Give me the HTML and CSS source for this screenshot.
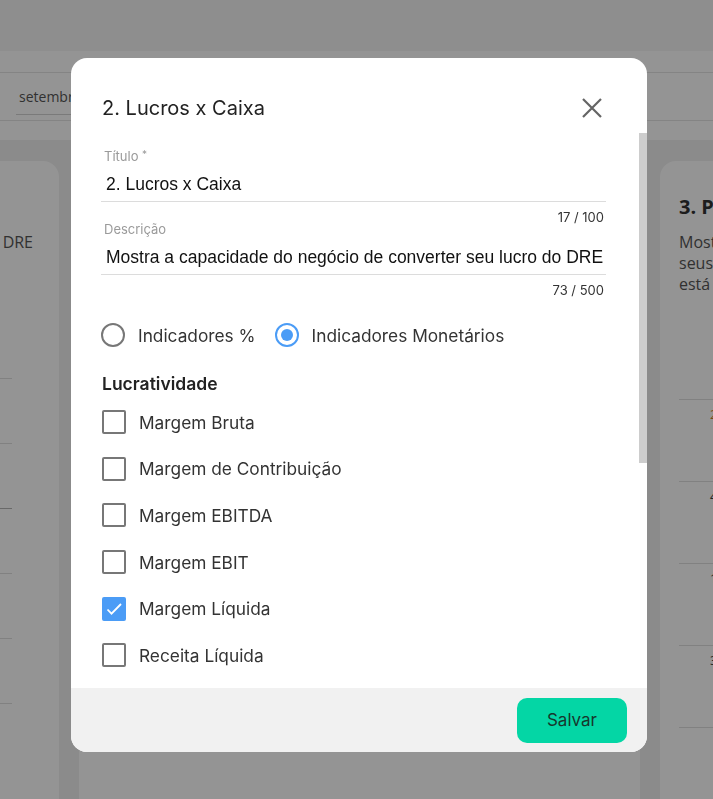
FILE: index.html
```html
<!DOCTYPE html>
<html lang="pt-BR">
<head>
  <meta charset="UTF-8">
  <meta name="viewport" content="width=device-width, initial-scale=1">
  <title>Indicadores - Lucros x Caixa</title>
  <link rel="stylesheet" href="styles.css">
</head>
<body>

<div class="page">
  <header class="topbar"></header>

  <div class="filters">
    <div class="filter-box">
      <div class="select">setembro de 2024</div>
    </div>
  </div>

  <main class="cards">
    <article class="card card-prev">
      <h3 class="card-title">1. Resultado</h3>
      <p class="card-desc">Mostra o resultado do período conforme o DRE</p>
      <ul class="rows rows-prev">
        <li></li><li></li><li class="strong"></li><li></li><li></li><li></li>
      </ul>
    </article>

    <article class="card">
      <h3 class="card-title">2. Lucros x Caixa</h3>
      <p class="card-desc">Mostra a capacidade do negócio de converter seu lucro do DRE em caixa.</p>
    </article>

    <article class="card">
      <h3 class="card-title">3. Prazos</h3>
      <p class="card-desc">Mostra os prazos médios de recebimento e pagamento e<br>seus impactos no ciclo financeiro da empresa, e se<br>está equilibrado.</p>
      <ul class="rows rows-next">
        <li><span class="warn">25 dias</span></li><li><span>40 dias</span></li><li><span>15 dias</span></li><li><span>30 dias</span></li><li></li>
      </ul>
    </article>
  </main>
</div>

<div class="overlay">
  <div class="modal">
    <div class="modal-head">
      <h2>2. Lucros x Caixa</h2>
      <button class="close" type="button">
        <svg width="24" height="24" viewBox="0 0 24 24"><path d="M3 3L21 21M21 3L3 21" stroke="#646464" stroke-width="2.2" fill="none"/></svg>
      </button>
    </div>

    <div class="modal-body">
      <div class="scroll-content">
        <div class="field">
          <label class="field-label">Título <span class="req">*</span></label>
          <div class="field-input">2. Lucros x Caixa</div>
        </div>
        <div class="counter">17 / 100</div>

        <div class="field">
          <label class="field-label">Descrição</label>
          <div class="field-input">Mostra a capacidade do negócio de converter seu lucro do DRE</div>
        </div>
        <div class="counter">73 / 500</div>

        <div class="radios">
          <label class="radio"><span class="dot"></span>Indicadores %</label>
          <label class="radio"><span class="dot on"></span>Indicadores Monetários</label>
        </div>

        <h4 class="group">Lucratividade</h4>
        <label class="check"><span class="box"></span>Margem Bruta</label>
        <label class="check"><span class="box"></span>Margem de Contribuição</label>
        <label class="check"><span class="box"></span>Margem EBITDA</label>
        <label class="check"><span class="box"></span>Margem EBIT</label>
        <label class="check"><span class="box on"><svg width="20" height="20" viewBox="0 0 20 20"><path d="M3.5 10.5l4 4.2L17 5" stroke="#fff" stroke-width="1.8" fill="none"/></svg></span>Margem Líquida</label>
        <label class="check"><span class="box"></span>Receita Líquida</label>
        <label class="check"><span class="box"></span>Lucro Líquido</label>
        <label class="check"><span class="box"></span>EBITDA</label>
        <label class="check"><span class="box"></span>Lucro Operacional</label>

        <h4 class="group">Caixa</h4>
        <label class="check"><span class="box"></span>Geração de Caixa Operacional</label>
        <label class="check"><span class="box"></span>Fluxo de Caixa Livre</label>
        <label class="check"><span class="box"></span>Conversão de Caixa</label>
      </div>
      <div class="scrollbar"><div class="thumb"></div></div>
    </div>

    <div class="modal-foot">
      <button class="btn-save" type="button">Salvar</button>
    </div>
  </div>
</div>

</body>
</html>
```

FILE: styles.css
```css
body {
  margin: 0;
  font-family: 'Open Sans', sans-serif;
  overflow: hidden;
}
.page {
  height: 100vh;
  display: flex;
  flex-direction: column;
  background: #f0f0f0;
}
.topbar {
  height: 51px;
  flex-shrink: 0;
  background: #f5f5f5;
}
.filters {
  height: 89px;
  flex-shrink: 0;
  box-sizing: border-box;
  padding-top: 21px;
  background: #fff;
}
.filter-box {
  height: 49px;
  box-sizing: border-box;
  border-top: 1px solid #e4e4e4;
  border-bottom: 1px solid #e4e4e4;
  padding-left: 16px;
}
.select {
  width: 170px;
  padding: 14px 3px 8px;
  line-height: 19px;
  font-size: 14px;
  color: #555;
  border-bottom: 1px solid #d2d2d2;
}
.cards {
  flex: 1;
  display: flex;
  justify-content: center;
  gap: 20px;
  padding: 21px 0 0 6px;
  overflow: hidden;
}
.card {
  flex: 0 0 561px;
  box-sizing: border-box;
  padding: 33px 47px 0 19px;
  background: #fff;
  border-radius: 16px 16px 0 0;
}
.card-title {
  margin: 0;
  font-size: 20px;
  line-height: 26px;
  font-weight: 700;
  color: #333;
}
.card-desc {
  margin: 12px 0 0;
  font-size: 16px;
  line-height: 21px;
  color: #555;
}
.card-prev .card-desc {
  text-align: right;
  white-space: nowrap;
  margin-right: -21px;
}
.rows {
  list-style: none;
  margin: 0;
  padding: 0;
}
.rows li {
  box-sizing: border-box;
  border-top: 1px solid #dedede;
}
.rows-prev {
  margin-top: 125px;
}
.rows-prev li {
  height: 65px;
}
.rows-prev li.strong {
  border-top-color: #b5b5b5;
}
.rows-next {
  margin-top: 104px;
}
.rows-next li {
  height: 82px;
  padding: 5px 0 0 31px;
  font-size: 13px;
  color: #444;
}
.rows-next .warn {
  color: #c9822a;
}

/* modal */
.overlay {
  position: fixed;
  inset: 0;
  display: flex;
  justify-content: center;
  align-items: flex-start;
  box-sizing: border-box;
  padding: 58px 0 0 5px;
  background: rgba(0,0,0,0.42);
}
.modal {
  width: 576px;
  height: 694px;
  display: flex;
  flex-direction: column;
  overflow: hidden;
  background: #fff;
  border-radius: 16px;
  font-family: Inter, sans-serif;
  color: #333;
}
.modal-head {
  height: 75px;
  flex-shrink: 0;
  box-sizing: border-box;
  padding: 25px 43px 0 31px;
  display: flex;
  align-items: center;
  justify-content: space-between;
}
.modal-head h2 {
  margin: 0;
  font-size: 20px;
  line-height: 26px;
  font-weight: 400;
  color: #222;
}
.close {
  width: 24px;
  height: 24px;
  padding: 0;
  border: none;
  background: none;
  cursor: pointer;
}
.close svg {
  display: block;
}
.modal-body {
  flex: 1;
  min-height: 0;
  display: flex;
}
.scroll-content {
  flex: 1;
  min-width: 0;
  overflow: hidden;
  padding: 16px 33px 16px 30px;
}
.scrollbar {
  width: 8px;
  flex-shrink: 0;
}
.thumb {
  height: 330px;
  background: #cdcdcd;
}
.field-label {
  display: block;
  padding-left: 3px;
  font-size: 13px;
  line-height: 14px;
  color: #9a9a9a;
}
.req {
  font-size: 10px;
  line-height: 10px;
  vertical-align: top;
}
.field-input {
  padding: 10px 2px 6px 5px;
  font-family: 'Liberation Sans', Arial, sans-serif;
  font-size: 17.5px;
  line-height: 22px;
  color: #111;
  white-space: nowrap;
  overflow: hidden;
  border-bottom: 1px solid #dcdcdc;
}
.field + .counter {
  margin-top: 8px;
}
.counter {
  padding-right: 2px;
  margin-bottom: -3px;
  text-align: right;
  font-size: 13px;
  line-height: 15px;
  color: #333;
}
.radios {
  display: flex;
  gap: 19px;
  margin-top: 28px;
}
.radio, .check {
  display: flex;
  align-items: center;
  gap: 13px;
  font-size: 17.3px;
  color: #333;
}
.dot {
  position: relative;
  width: 24px;
  height: 24px;
  box-sizing: border-box;
  border: 2px solid #777;
  border-radius: 50%;
}
.dot.on {
  border-color: #4b9cf6;
}
.dot.on::after {
  content: "";
  position: absolute;
  left: 4px;
  top: 4px;
  width: 12px;
  height: 12px;
  border-radius: 50%;
  background: #4b9cf6;
}
.group {
  margin: 27px 0 5px 1px;
  font-size: 17.5px;
  line-height: 20px;
  font-weight: 600;
  color: #222;
}
.check {
  height: 46.6px;
  margin-left: 1px;
}
.box {
  width: 24px;
  height: 24px;
  flex-shrink: 0;
  box-sizing: border-box;
  border: 2px solid #777;
  border-radius: 2px;
  display: flex;
  align-items: center;
  justify-content: center;
}
.box.on {
  background: #4b9cf6;
  border-color: #4b9cf6;
}
.modal-foot {
  height: 64px;
  flex-shrink: 0;
  display: flex;
  align-items: center;
  justify-content: flex-end;
  padding-right: 20px;
  background: #f1f1f1;
}
.btn-save {
  width: 110px;
  height: 45px;
  border: none;
  border-radius: 10px;
  background: #04d6a5;
  color: #17382d;
  font-family: Inter, sans-serif;
  font-size: 17px;
  cursor: pointer;
}
```
